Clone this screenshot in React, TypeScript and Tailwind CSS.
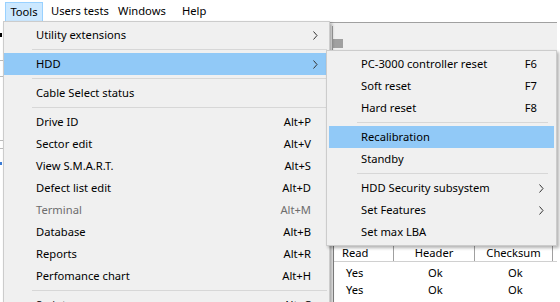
import React from 'react'

type Item =
  | { kind: 'item'; label: string; shortcut?: string; sub?: boolean; active?: boolean; disabled?: boolean }
  | { kind: 'sep' }

const toolsMenu: Item[] = [
  { kind: 'item', label: 'Utility extensions', sub: true },
  { kind: 'sep' },
  { kind: 'item', label: 'HDD', sub: true, active: true },
  { kind: 'sep' },
  { kind: 'item', label: 'Cable Select status' },
  { kind: 'sep' },
  { kind: 'item', label: 'Drive ID', shortcut: 'Alt+P' },
  { kind: 'item', label: 'Sector edit', shortcut: 'Alt+V' },
  { kind: 'item', label: 'View S.M.A.R.T.', shortcut: 'Alt+S' },
  { kind: 'item', label: 'Defect list edit', shortcut: 'Alt+D' },
  { kind: 'item', label: 'Terminal', shortcut: 'Alt+M', disabled: true },
  { kind: 'item', label: 'Database', shortcut: 'Alt+B' },
  { kind: 'item', label: 'Reports', shortcut: 'Alt+R' },
  { kind: 'item', label: 'Perfomance chart', shortcut: 'Alt+H' },
  { kind: 'sep' },
  { kind: 'item', label: 'Scripts', shortcut: 'Alt+C' },
]

const hddMenu: Item[] = [
  { kind: 'item', label: 'PC-3000 controller reset', shortcut: 'F6' },
  { kind: 'item', label: 'Soft reset', shortcut: 'F7' },
  { kind: 'item', label: 'Hard reset', shortcut: 'F8' },
  { kind: 'sep' },
  { kind: 'item', label: 'Recalibration', active: true },
  { kind: 'item', label: 'Standby' },
  { kind: 'sep' },
  { kind: 'item', label: 'HDD Security subsystem', sub: true },
  { kind: 'item', label: 'Set Features', sub: true },
  { kind: 'item', label: 'Set max LBA' },
]

function Chevron() {
  return (
    <svg width="5" height="9" viewBox="0 0 5 9" className="shrink-0">
      <path d="M0.5 0.5 L4 4.5 L0.5 8.5" fill="none" stroke="#333" strokeWidth="1" />
    </svg>
  )
}

function MenuRows({ items, sepLeft, padRight, arrowPad }: { items: Item[]; sepLeft: string; padRight: string; arrowPad: string }) {
  return (
    <>
      {items.map((it, i) =>
        it.kind === 'sep' ? (
          <div key={i} className="h-[7px] flex items-center">
            <div className={`h-px flex-1 bg-[#d7d7d7] ${sepLeft}`} />
          </div>
        ) : (
          <div
            key={i}
            className={`h-[22px] flex items-center pl-[32px] ${it.active ? 'bg-[#91c9f7]' : ''} ${
              it.disabled ? 'text-[#6d6d6d]' : 'text-black'
            }`}
          >
            <span className="flex-1 whitespace-nowrap">{it.label}</span>
            {it.shortcut && <span className={`whitespace-nowrap ${padRight}`}>{it.shortcut}</span>}
            {it.sub && (
              <span className={arrowPad}>
                <Chevron />
              </span>
            )}
          </div>
        )
      )}
    </>
  )
}

export default function App() {
  return (
    <div
      className="relative w-[560px] h-[302px] overflow-hidden bg-white text-[11.2px] leading-none"
      style={{ fontFamily: '"Segoe UI", "Noto Sans", sans-serif' }}
    >
      {/* menu bar */}
      <div className="h-[22px] flex items-center bg-white">
        <div className="ml-[5px] w-[38px] h-[20px] mt-px flex items-center justify-center bg-[#cce8ff] border border-[#99d1ff]">
          Tools
        </div>
        <div className="w-[75px] pl-[8px]">Users tests</div>
        <div className="w-[64px]">Windows</div>
        <div>Help</div>
      </div>

      {/* window behind the menus */}
      <div className="flex h-[280px]">
        <div className="w-[330px] relative">
          <div className="absolute left-0 top-[11px] w-[2px] h-[4px] bg-black" />
          <div className="absolute left-0 top-[38px] w-[3px] h-px bg-[#bbb]" />
          <div className="absolute left-0 top-[54px] w-[3px] h-px bg-[#bbb]" />
          <div className="absolute left-0 top-[118px] w-[3px] h-px bg-[#bbb]" />
          <div className="absolute left-0 top-[126px] w-[3px] h-px bg-[#bbb]" />
          <div className="absolute left-0 top-[140px] w-[2px] h-[3px] bg-[#3a7bd5]" />
        </div>
        <div className="w-[227px] flex flex-col bg-[#f0f0f0] border-t border-[#a0a0a0]">
          <div className="h-[27px] flex items-end">
            <div className="w-px h-[24px] bg-[#a0a0a0] ml-[2px]" />
            <div className="w-[10px] h-[9px] bg-[#a0a0a0] mb-[2px]" />
          </div>
          <div className="flex-1" />
          <div className="ml-[3px] h-[58px] bg-white border-l border-[#808080] flex flex-col">
            <div className="h-[18px] shrink-0 flex border-b border-[#d0d0d0]">
              <div className="w-[60px] border-r border-[#a0a0a0] pl-[8px] flex items-center">Read</div>
              <div className="w-[81px] border-r border-[#a0a0a0] flex items-center justify-center">Header</div>
              <div className="w-[78px] border-r border-[#a0a0a0] flex items-center justify-center">Checksum</div>
            </div>
            <div className="pt-[2px] flex flex-col">
              {['Yes', 'Yes', 'Yes'].map((v, i) => (
                <div key={i} className="h-[17px] flex items-center shrink-0">
                  <div className="w-[60px] pl-[12px]">{v}</div>
                  <div className="w-[81px] pl-[34px]">Ok</div>
                  <div className="w-[78px] pl-[33px]">Ok</div>
                </div>
              ))}
            </div>
          </div>
        </div>
        <div className="flex-1 bg-white" />
      </div>

      {/* Tools dropdown */}
      <div className="absolute left-[3px] top-[21px] w-[327px] bg-[#f0f0f0] border border-[#cccccc] pr-[2px] py-[2px] shadow-[2px_2px_3px_rgba(0,0,0,0.3)]">
        <MenuRows items={toolsMenu} sepLeft="ml-[28px]" padRight="pr-[16px]" arrowPad="pr-[9px]" />
      </div>

      {/* HDD submenu */}
      <div className="absolute left-[326px] top-[50px] w-[231px] bg-[#f0f0f0] border border-[#cccccc] p-[2px] shadow-[2px_2px_3px_rgba(0,0,0,0.3)]">
        <MenuRows items={hddMenu} sepLeft="ml-[28px] mr-[6px]" padRight="pr-[17px]" arrowPad="pr-[10px]" />
      </div>
    </div>
  )
}
